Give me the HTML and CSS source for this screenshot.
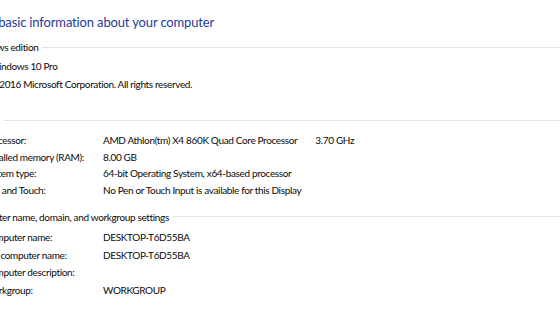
FILE: index.html
```html
<!DOCTYPE html>
<html lang="en">
<head>
	<meta charset="UTF-8">
	<title>System</title>
	<link rel="stylesheet" href="styles.css">
</head>
<body>
	<div class="page">
		<h1 class="title">View basic information about your computer</h1>

		<div class="group">
			<div class="legend"><span>Windows edition</span></div>
			<div class="plain">
				<p>Windows 10 Pro</p>
				<p>© 2016 Microsoft Corporation. All rights reserved.</p>
			</div>
		</div>

		<div class="group group-system">
			<div class="legend"><span>System</span></div>
			<div class="props">
				<div class="label">Processor:</div>
				<div class="value">AMD Athlon(tm) X4 860K Quad Core Processor<span class="speed">3.70 GHz</span></div>
				<div class="label">Installed memory (RAM):</div>
				<div class="value">8.00 GB</div>
				<div class="label">System type:</div>
				<div class="value">64-bit Operating System, x64-based processor</div>
				<div class="label">Pen and Touch:</div>
				<div class="value">No Pen or Touch Input is available for this Display</div>
			</div>
		</div>

		<div class="group group-name">
			<div class="legend"><span>Computer name, domain, and workgroup settings</span></div>
			<div class="props props-name">
				<div class="label">Computer name:</div>
				<div class="value">DESKTOP-T6D55BA</div>
				<div class="label">Full computer name:</div>
				<div class="value">DESKTOP-T6D55BA</div>
				<div class="label">Computer description:</div>
				<div class="value"></div>
				<div class="label">Workgroup:</div>
				<div class="value">WORKGROUP</div>
			</div>
		</div>
	</div>
</body>
</html>
```

FILE: styles.css
```css
*{
	margin: 0;
	padding: 0;
}
body{
	background-color: #fff;
	font-family: Lato, "Noto Sans", sans-serif;
	font-size: 10px;
	letter-spacing: -0.35px;
	color: #0a0a0a;
	overflow: hidden;
	white-space: nowrap;
}
.page{
	margin-left: -31px;
	padding-top: 12px;
}
.title{
	font-size: 13px;
	letter-spacing: -0.15px;
	font-weight: normal;
	color: #1f3a9a;
	margin-left: -2px;
	line-height: 20px;
}
.group{
	margin-top: 7px;
}
.legend{
	display: flex;
	align-items: center;
	height: 16px;
	line-height: 16px;
}
.legend::after{
	content: "";
	flex: 1;
	height: 1px;
	margin-left: 4px;
	background-color: #e2e2e2;
}
.plain{
	padding: 2px 0 0 20px;
}
.plain p{
	line-height: 18px;
}
.group-system{
	margin-top: 19px;
}
.group-name{
	margin-top: 10px;
}
.props{
	display: grid;
	grid-template-columns: 119px 1fr;
	padding: 4px 0 0 15px;
	line-height: 16.7px;
}
.props-name{
	padding-top: 4px;
	line-height: 17.8px;
}
.speed{
	margin-left: 18px;
}
```
